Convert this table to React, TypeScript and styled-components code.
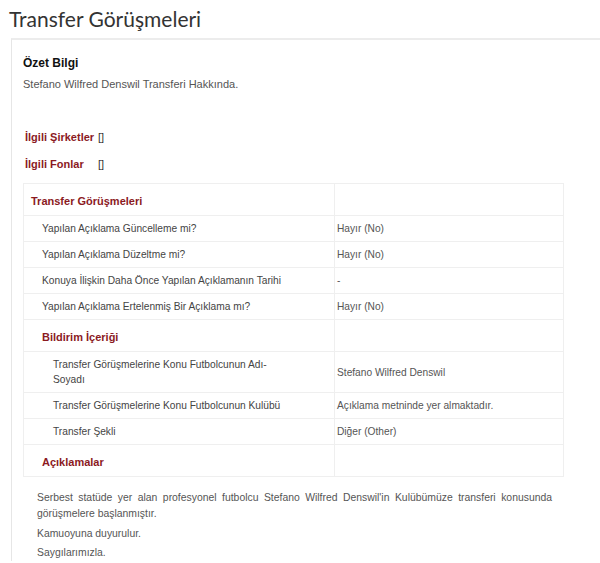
import React from "react";
import styled, { createGlobalStyle } from "styled-components";

const Global = createGlobalStyle`
  html, body { margin: 0; padding: 0; background: #fff; }
  body { font-family: "Liberation Sans", Arial, sans-serif; }
`;

const Page = styled.div`
  width: 600px;
  overflow: hidden;
`;

const Title = styled.h1`
  margin: 0;
  height: 38px;
  padding: 6px 0 0 9px;
  box-sizing: border-box;
  font-family: Lato, "Open Sans", sans-serif;
  font-weight: 400;
  font-size: 21px;
  line-height: 26px;
  color: #333;
`;

const Panel = styled.section`
  margin-left: 11px;
  border-top: 2px solid #ececec;
  border-left: 1px solid #e6e6e6;
  padding: 15px 36px 0 11px;
`;

const SummaryTitle = styled.h3`
  margin: 0;
  font-size: 12px;
  font-weight: 700;
  line-height: 16px;
  color: #111;
`;

const SummaryText = styled.p`
  margin: 6px 0 0;
  font-size: 11px;
  line-height: 14px;
  color: #555;
`;

const Related = styled.div`
  display: flex;
  flex-direction: column;
  gap: 13px;
  margin: 39px 0 0 2px;
`;

const RelatedRow = styled.div`
  display: flex;
  align-items: center;
  font-size: 11px;
  line-height: 14px;
`;

const RelatedLabel = styled.span`
  display: inline-block;
  min-width: 73px;
  font-weight: 700;
  color: #8b1a1f;
`;

const RelatedValue = styled.span`
  color: #333;
`;

const Table = styled.table`
  margin-top: 12px;
  width: 541px;
  border-collapse: collapse;
  font-size: 10.2px;
  color: #444;
`;

const Row = styled.tr``;

const LabelCell = styled.td<{ $level: number; $section?: boolean }>`
  width: 311px;
  box-sizing: border-box;
  border: 1px solid #efefef;
  height: ${(p) => (p.$section ? 32 : 26)}px;
  padding: ${(p) => (p.$section ? "3px" : "0")} 6px 0 ${(p) => 7 + p.$level * 11}px;
  vertical-align: middle;
  line-height: 15px;
  font-size: ${(p) => (p.$section ? "11px" : "inherit")};
  font-weight: ${(p) => (p.$section ? 700 : 400)};
  color: ${(p) => (p.$section ? "#8b1a1f" : "#444")};
`;

const ValueCell = styled.td<{ $section?: boolean }>`
  box-sizing: border-box;
  border: 1px solid #efefef;
  padding: 0 4px 0 2px;
  vertical-align: middle;
  line-height: 15px;
  color: #555;
`;

const Wrap = styled.span`
  display: inline-block;
  max-width: 222px;
  padding: 5px 0 5px;
`;

const Note = styled.div`
  margin: 13px 12px 0 14px;
  font-size: 10.4px;
  line-height: 16px;
  color: #555;
`;

const Para = styled.p<{ $gap?: number }>`
  margin: ${(p) => p.$gap ?? 0}px 0 0;
  text-align: justify;
`;

type Item = { label: string; value?: string; level: number; section?: boolean; wrap?: boolean };

const rows: Item[] = [
  { label: "Transfer Görüşmeleri", level: 0, section: true },
  { label: "Yapılan Açıklama Güncelleme mi?", value: "Hayır (No)", level: 1 },
  { label: "Yapılan Açıklama Düzeltme mi?", value: "Hayır (No)", level: 1 },
  { label: "Konuya İlişkin Daha Önce Yapılan Açıklamanın Tarihi", value: "-", level: 1 },
  { label: "Yapılan Açıklama Ertelenmiş Bir Açıklama mı?", value: "Hayır (No)", level: 1 },
  { label: "Bildirim İçeriği", level: 1, section: true },
  {
    label: "Transfer Görüşmelerine Konu Futbolcunun Adı-Soyadı",
    value: "Stefano Wilfred Denswil",
    level: 2,
    wrap: true,
  },
  {
    label: "Transfer Görüşmelerine Konu Futbolcunun Kulübü",
    value: "Açıklama metninde yer almaktadır.",
    level: 2,
  },
  { label: "Transfer Şekli", value: "Diğer (Other)", level: 2 },
  { label: "Açıklamalar", level: 1, section: true },
];

export default function App() {
  return (
    <Page>
      <Global />
      <Title>Transfer Görüşmeleri</Title>
      <Panel>
        <SummaryTitle>Özet Bilgi</SummaryTitle>
        <SummaryText>Stefano Wilfred Denswil Transferi Hakkında.</SummaryText>
        <Related>
          <RelatedRow>
            <RelatedLabel>İlgili Şirketler</RelatedLabel>
            <RelatedValue>[]</RelatedValue>
          </RelatedRow>
          <RelatedRow>
            <RelatedLabel>İlgili Fonlar</RelatedLabel>
            <RelatedValue>[]</RelatedValue>
          </RelatedRow>
        </Related>
        <Table>
          <tbody>
            {rows.map((r) => (
              <Row key={r.label}>
                <LabelCell $level={r.level} $section={r.section}>
                  {r.wrap ? <Wrap>{r.label}</Wrap> : r.label}
                </LabelCell>
                <ValueCell $section={r.section}>{r.value ?? ""}</ValueCell>
              </Row>
            ))}
          </tbody>
        </Table>
        <Note>
          <Para>
            Serbest statüde yer alan profesyonel futbolcu Stefano Wilfred Denswil'in Kulübümüze
            transferi konusunda görüşmelere başlanmıştır.
          </Para>
          <Para $gap={4}>Kamuoyuna duyurulur.</Para>
          <Para $gap={3}>Saygılarımızla.</Para>
        </Note>
      </Panel>
    </Page>
  );
}
